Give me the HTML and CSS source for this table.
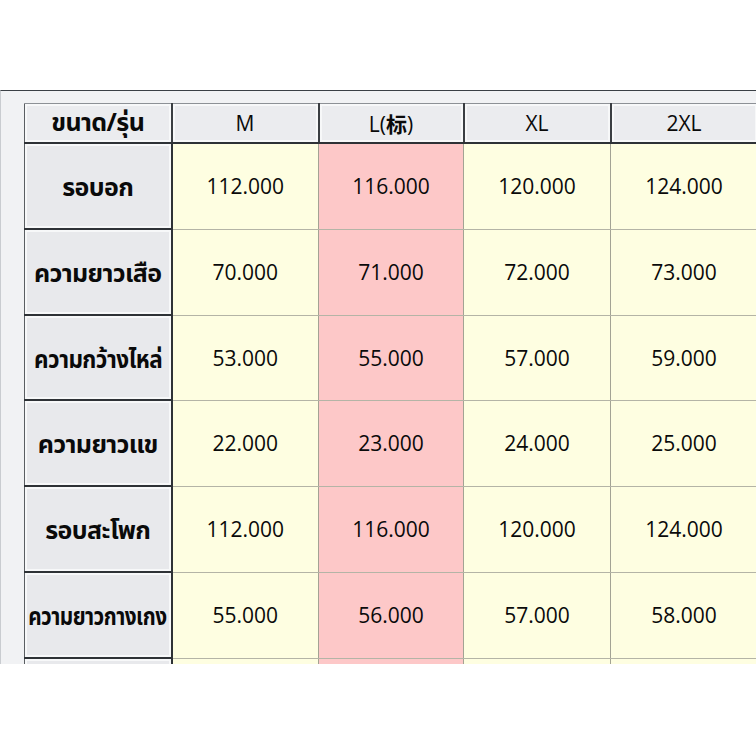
FILE: index.html
```html
<!DOCTYPE html>
<html lang="th">
<head>
<meta charset="utf-8">
<link rel="stylesheet" href="styles.css">
</head>
<body>
<div class="top"></div>
<div class="sheet">
  <table class="sizes">
    <colgroup>
      <col class="c-label"><col class="c-m"><col class="c-l"><col class="c-xl"><col class="c-2xl">
    </colgroup>
    <thead>
      <tr class="head">
        <th class="label"><div class="fit"><span>ขนาด/รุ่น</span></div></th>
        <th>M</th>
        <th>L(<span class="cjk">标</span>)</th>
        <th>XL</th>
        <th>2XL</th>
      </tr>
    </thead>
    <tbody>
      <tr><th class="label"><div class="fit"><span>รอบอก</span></div></th><td>112.000</td><td class="hl">116.000</td><td>120.000</td><td>124.000</td></tr>
      <tr><th class="label"><div class="fit"><span>ความยาวเสือ</span></div></th><td>70.000</td><td class="hl">71.000</td><td>72.000</td><td>73.000</td></tr>
      <tr class="short"><th class="label"><div class="fit"><span class="sq1">ความกว้างไหล่</span></div></th><td>53.000</td><td class="hl">55.000</td><td>57.000</td><td>59.000</td></tr>
      <tr><th class="label"><div class="fit"><span>ความยาวแข</span></div></th><td>22.000</td><td class="hl">23.000</td><td>24.000</td><td>25.000</td></tr>
      <tr><th class="label"><div class="fit"><span>รอบสะโพก</span></div></th><td>112.000</td><td class="hl">116.000</td><td>120.000</td><td>124.000</td></tr>
      <tr><th class="label"><div class="fit"><span class="sq2">ความยาวกางเกง</span></div></th><td>55.000</td><td class="hl">56.000</td><td>57.000</td><td>58.000</td></tr>
      <tr><th class="label"></th><td></td><td class="hl"></td><td></td><td></td></tr>
    </tbody>
  </table>
</div>
</body>
</html>
```

FILE: styles.css
```css
html, body {
  margin: 0;
  padding: 0;
  background: #ffffff;
}

.top {
  height: 90px;
}

.sheet {
  height: 574px;
  box-sizing: border-box;
  border-top: 1px solid #3b4046;
  border-left: 1px solid #c9ccd0;
  background: #f1f2f4;
  padding: 12px 0 0 23px;
  overflow: hidden;
}

.sizes {
  border-collapse: collapse;
  table-layout: fixed;
  width: 733px;
  font-family: "Open Sans", "Noto Sans", "Noto Sans CJK SC", sans-serif;
  color: #0a0a0a;
}

.c-label { width: 147px; }
.c-m { width: 147px; }
.c-l { width: 145px; }
.c-xl { width: 147px; }
.c-2xl { width: 147px; }

.sizes th,
.sizes td {
  padding: 0;
  text-align: center;
  vertical-align: middle;
}

/* header row */
.head th {
  height: 35px;
  background: #ebecef;
  font-weight: 500;
  font-size: 21px;
  border-top: 1px solid #8d9196;
  border-bottom: 2px solid #2e3236;
  border-left: 2px solid #3a3e42;
  border-right: 2px solid #3a3e42;
  box-shadow: inset 0 0 0 2px #f7f8f9;
}

.cjk {
  font-family: "Noto Sans CJK SC", sans-serif;
  font-weight: 700;
}

.head th.label {
  font-family: "Noto Sans Thai", "Leelawadee UI", "Noto Sans", sans-serif;
  font-weight: 700;
  font-size: 25px;
  letter-spacing: -0.6px;
  border-left: 1px solid #5a5e62;
}

.fit {
  display: flex;
  justify-content: center;
  align-items: center;
  white-space: nowrap;
}

.fit span {
  display: inline-block;
}

.fit .sq1 {
  transform: scaleX(0.9);
}

.fit .sq2 {
  transform: scaleX(0.83);
}

/* label column */
tbody th.label {
  height: 80px;
  padding-top: 4px;
  background: #e8e9ec;
  font-family: "Noto Sans Thai", "Leelawadee UI", "Noto Sans", sans-serif;
  font-weight: 700;
  font-size: 25px;
  letter-spacing: -0.6px;
  border-left: 1px solid #5a5e62;
  border-right: 2px solid #2e3236;
  border-bottom: 2px solid #2e3236;
  box-shadow: inset 0 0 0 2px #f7f8f9;
}

.short th.label {
  height: 79px;
}

/* data cells */
tbody td {
  height: 84px;
  background: #fefee1;
  font-size: 21px;
  font-weight: 500;
  border-left: 1px solid #a3a394;
  border-right: 1px solid #a3a394;
  border-bottom: 1px solid #b4b4a6;
}

.short td {
  height: 83px;
}

tbody td.hl {
  background: #fdc8c8;
}
```
